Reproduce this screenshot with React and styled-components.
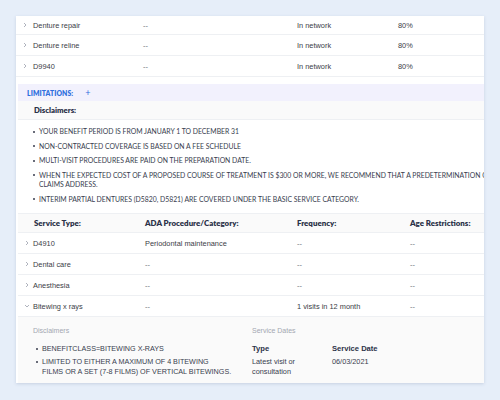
import React from "react";
import styled, { createGlobalStyle } from "styled-components";

const GlobalStyle = createGlobalStyle`
  html, body {
    margin: 0;
    padding: 0;
    background: #e6eef9;
  }
  body {
    font-family: "Liberation Sans", Arial, sans-serif;
    color: #3a3d46;
  }
`;

const topRows = [
  { name: "Denture repair", code: "--", network: "In network", pct: "80%" },
  { name: "Denture reline", code: "--", network: "In network", pct: "80%" },
  { name: "D9940", code: "--", network: "In network", pct: "80%" },
];

const disclaimers = [
  ["YOUR BENEFIT PERIOD IS FROM JANUARY 1 TO DECEMBER 31"],
  ["NON-CONTRACTED COVERAGE IS BASED ON A FEE SCHEDULE"],
  ["MULTI-VISIT PROCEDURES ARE PAID ON THE PREPARATION DATE."],
  [
    "WHEN THE EXPECTED COST OF A PROPOSED COURSE OF TREATMENT IS $300 OR MORE, WE RECOMMEND THAT A PREDETERMINATION OF BENEFITS BE SUBMITTED TO THE",
    "CLAIMS ADDRESS.",
  ],
  ["INTERIM PARTIAL DENTURES (D5820, D5821) ARE COVERED UNDER THE BASIC SERVICE CATEGORY."],
];

const bitewingNotes = [
  ["BENEFITCLASS=BITEWING X-RAYS"],
  ["LIMITED TO EITHER A MAXIMUM OF 4 BITEWING", "FILMS OR A SET (7-8 FILMS) OF VERTICAL BITEWINGS."],
];

const serviceRows = [
  { name: "D4910", ada: "Periodontal maintenance", freq: "--", age: "--" },
  { name: "Dental care", ada: "--", freq: "--", age: "--" },
  { name: "Anesthesia", ada: "--", freq: "--", age: "--" },
  { name: "Bitewing x rays", ada: "--", freq: "1 visits in 12 month", age: "--", open: true },
];

const Chevron = ({ open }) => (
  <svg width="6" height="6" viewBox="0 0 6 6">
    {open ? (
      <path d="M1 2 L3 4 L5 2" fill="none" stroke="#9aa0ac" strokeWidth="0.8" />
    ) : (
      <path d="M2 1 L4 3 L2 5" fill="none" stroke="#9aa0ac" strokeWidth="0.8" />
    )}
  </svg>
);

const App = () => {
  return (
    <>
      <GlobalStyle />
      <Page>
        <Card>
          {topRows.map((r) => (
            <TopRow key={r.name}>
              <ChevCell><Chevron /></ChevCell>
              <Cell>{r.name}</Cell>
              <Cell muted>{r.code}</Cell>
              <Cell>{r.network}</Cell>
              <Cell>{r.pct}</Cell>
            </TopRow>
          ))}
          <Section>
            <LimitBar>
              <LimitTitle>LIMITATIONS:</LimitTitle>
              <Plus>+</Plus>
            </LimitBar>
            <DisclaimerHead>Disclaimers:</DisclaimerHead>
            <BulletList>
              {disclaimers.map((lines, i) => (
                <Bullet key={i}>
                  {lines.map((l, j) => (
                    <BulletLine key={j}>{l}</BulletLine>
                  ))}
                </Bullet>
              ))}
            </BulletList>
            <HeadRow>
              <span />
              <HeadCell>Service Type:</HeadCell>
              <HeadCell>ADA Procedure/Category:</HeadCell>
              <HeadCell>Frequency:</HeadCell>
              <HeadCell>Age Restrictions:</HeadCell>
            </HeadRow>
            {serviceRows.map((r) => (
              <ServiceRow key={r.name}>
                <ChevCell><Chevron open={r.open} /></ChevCell>
                <Cell>{r.name}</Cell>
                <Cell muted={r.ada === "--"}>{r.ada}</Cell>
                <Cell muted={r.freq === "--"}>{r.freq}</Cell>
                <Cell muted>{r.age}</Cell>
              </ServiceRow>
            ))}
            <Expanded>
              <ExpandCol>
                <SmallLabel>Disclaimers</SmallLabel>
                <SmallList>
                  {bitewingNotes.map((lines, i) => (
                    <SmallItem key={i}>
                      {lines.map((l, j) => (
                        <BulletLine key={j}>{l}</BulletLine>
                      ))}
                    </SmallItem>
                  ))}
                </SmallList>
              </ExpandCol>
              <ExpandCol>
                <SmallLabel>Service Dates</SmallLabel>
                <DatesGrid>
                  <DateHead>Type</DateHead>
                  <DateHead>Service Date</DateHead>
                  <DateValue>Latest visit or consultation</DateValue>
                  <DateValue>06/03/2021</DateValue>
                </DatesGrid>
              </ExpandCol>
            </Expanded>
          </Section>
        </Card>
      </Page>
    </>
  );
};

export default App;

const Page = styled.div`
  width: 500px;
  height: 400px;
  padding: 16px;
  box-sizing: border-box;
  overflow: hidden;
`;

const Card = styled.div`
  width: 468px;
  height: 367px;
  background: #ffffff;
  box-shadow: 0 1px 3px rgba(60, 80, 120, 0.18);
  overflow: hidden;
  display: flex;
  flex-direction: column;
`;

const TopRow = styled.div`
  display: grid;
  grid-template-columns: 17px 110px 154px 101px 1fr;
  align-items: center;
  flex-shrink: 0;
  height: 20px;
  border-bottom: 1px solid #eef0f3;
  &:first-child {
    height: 18px;
  }
`;

const ChevCell = styled.div`
  display: flex;
  align-items: center;
  padding-left: 6px;
`;

const Cell = styled.div`
  font-size: 7.4px;
  color: ${(p) => (p.muted ? "#6b6f78" : "#3a3d46")};
  white-space: nowrap;
`;

const Section = styled.div`
  margin: 7px 0 0 2px;
  flex: 1;
  display: flex;
  flex-direction: column;
`;

const LimitBar = styled.div`
  height: 17px;
  flex-shrink: 0;
  background: #f2f1fd;
  display: flex;
  align-items: center;
  padding-left: 9px;
  gap: 12px;
`;

const LimitTitle = styled.span`
  font-family: Lato, "Open Sans", sans-serif;
  font-weight: 800;
  font-size: 6.8px;
  color: #2f6fde;
  letter-spacing: 0.1px;
`;

const Plus = styled.span`
  font-family: Lato, sans-serif;
  font-size: 9px;
  color: #2f6fde;
  line-height: 1;
`;

const DisclaimerHead = styled.div`
  height: 18px;
  flex-shrink: 0;
  background: #fafafa;
  border-bottom: 1px solid #eef0f3;
  display: flex;
  align-items: center;
  padding-left: 16px;
  font-family: Lato, sans-serif;
  font-weight: 800;
  font-size: 7.7px;
  color: #2c3249;
`;

const BulletList = styled.ul`
  margin: 0;
  padding: 7px 0 9px 15px;
  list-style: none;
  display: flex;
  flex-direction: column;
  flex-shrink: 0;
  gap: 5px;
  border-bottom: 1px solid #eef0f3;
`;

const Bullet = styled.li`
  position: relative;
  padding-left: 6px;
  font-family: Lato, sans-serif;
  font-size: 6.85px;
  color: #383d4e;
  line-height: 9.5px;
  &::before {
    content: "";
    position: absolute;
    left: 0;
    top: 3.8px;
    width: 2px;
    height: 2px;
    border-radius: 50%;
    background: #383d4e;
  }
`;

const BulletLine = styled.div`
  white-space: nowrap;
`;

const HeadRow = styled.div`
  display: grid;
  grid-template-columns: 16px 111px 152px 113px 1fr;
  align-items: center;
  flex-shrink: 0;
  height: 18px;
  background: #fafafa;
  border-bottom: 1px solid #eef0f3;
`;

const HeadCell = styled.div`
  font-family: Lato, sans-serif;
  font-weight: 800;
  font-size: 7.9px;
  color: #2c3249;
  white-space: nowrap;
`;

const ServiceRow = styled(TopRow)`
  grid-template-columns: 15px 112px 152px 113px 1fr;
  &:first-child {
    height: 20px;
  }
`;

const Expanded = styled.div`
  flex: 1;
  background: #fafafa;
  display: grid;
  grid-template-columns: 219px 1fr;
  align-content: start;
  padding: 10px 0 0 15px;
`;

const ExpandCol = styled.div`
  display: flex;
  flex-direction: column;
`;

const SmallLabel = styled.div`
  font-size: 7px;
  line-height: 8px;
  color: #a3a7b1;
  margin-bottom: 9px;
`;

const SmallList = styled.ul`
  margin: 0;
  padding: 0 0 0 9px;
  list-style: none;
  display: flex;
  flex-direction: column;
  gap: 3px;
`;

const SmallItem = styled.li`
  position: relative;
  font-size: 7.2px;
  line-height: 10px;
  color: #383d4e;
  &::before {
    content: "";
    position: absolute;
    left: -6px;
    top: 4px;
    width: 2px;
    height: 2px;
    border-radius: 50%;
    background: #383d4e;
  }
`;

const DatesGrid = styled.div`
  display: grid;
  grid-template-columns: 80px 1fr;
  row-gap: 3px;
`;

const DateHead = styled.div`
  font-size: 7.6px;
  line-height: 10px;
  font-weight: 700;
  color: #2c3249;
`;

const DateValue = styled.div`
  font-size: 7.3px;
  line-height: 10px;
  color: #383d4e;
  width: 66px;
`;
